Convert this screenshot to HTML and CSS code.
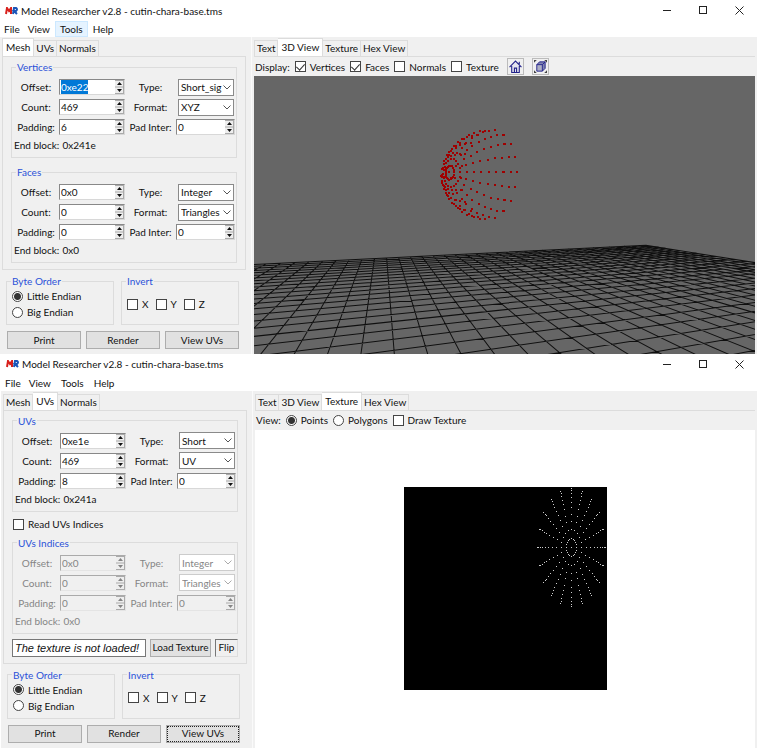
FILE: index.html
```html
<!DOCTYPE html>
<html lang="en">
<head>
<meta charset="utf-8">
<title>Model Researcher</title>
<link rel="stylesheet" href="styles.css">
</head>
<body>
<svg width="0" height="0" class="defs" aria-hidden="true">
  <symbol id="logo" viewBox="0 0 13 8">
    <path d="M1 7L2 1L4 4L6 1L6 7" fill="none" stroke="#d8201c" stroke-width="2"/>
    <path d="M8 7L9 1H11Q13 2 11 4H9L12 7" fill="none" stroke="#1a55b8" stroke-width="2"/>
  </symbol>
  <symbol id="min" viewBox="0 0 9 9"><path d="M0 4.5H8" stroke="#222" fill="none"/></symbol>
  <symbol id="max" viewBox="0 0 9 9"><rect x=".5" y=".5" width="7" height="7" stroke="#222" fill="none"/></symbol>
  <symbol id="close" viewBox="0 0 9 9"><path d="M.5 .5L8.500 8.500M8.500 .5L.5 8.500" stroke="#222" fill="none"/></symbol>
  <symbol id="home" viewBox="0 0 12 12">
    <path d="M2 6V11.500H10V6L6 2Z" fill="#e4e4ee"/>
    <path d="M.5 6.500L6 1L11.500 6.500M2.500 5.500V11.500H9.500V5.500M9.500 4V1.500M5 11V7.500H7V11" fill="none" stroke="#22228a"/>
  </symbol>
  <symbol id="cube" viewBox="0 0 14 14">
    <path d="M3 5H9V12H3Z" fill="#aeb0c4"/><path d="M3 5L6 2H12L9 5M12 2V9L9 12V5" fill="#8084b0"/>
    <path d="M3 5H9V12H3ZM3 5L6 2H12L9 5M12 2V9L9 12" fill="none" stroke="#22228a"/>
    <path d="M0 0H3L0 3ZM14 0V3L11 0ZM0 14V11L3 14ZM14 14H11L14 11Z" fill="#444"/>
  </symbol>
</svg>

<main class="desktop">
<section class="window first">
  <header class="title"><svg class="logo"><use href="#logo"/></svg><h1>Model Researcher v2.8 - cutin-chara-base.tms</h1>
    <button class="sys" aria-label="Minimize"><svg><use href="#min"/></svg></button><button class="sys" aria-label="Maximize"><svg><use href="#max"/></svg></button><button class="sys" aria-label="Close"><svg><use href="#close"/></svg></button></header>
  <nav class="menu"><button>File</button><button>View</button><button class="hot">Tools</button><button>Help</button></nav>
  <div class="body">
    <div class="side">
      <div class="tabs"><button class="on">Mesh</button><button>UVs</button><button>Normals</button></div>
      <div class="page">
        <fieldset class="params" data-id="v" data-v="0xe22,Short_sig,469,XYZ,6,0,0x241e" data-selected="yes"><legend>Vertices</legend></fieldset>
        <fieldset class="params" data-id="f" data-v="0x0,Integer,0,Triangles,0,0,0x0"><legend>Faces</legend></fieldset>
      </div>
      <div class="options">
        <fieldset class="order"><legend>Byte Order</legend><label><input type="radio" name="bo1" checked>Little Endian</label><label><input type="radio" name="bo1">Big Endian</label></fieldset>
        <fieldset class="invert"><legend>Invert</legend><label><input type="checkbox">X</label><label><input type="checkbox">Y</label><label><input type="checkbox">Z</label></fieldset>
      </div>
      <div class="actions"><button>Print</button><button>Render</button><button>View UVs</button></div>
    </div>
    <div class="main">
      <div class="tabs"><button>Text</button><button class="on">3D View</button><button>Texture</button><button>Hex View</button></div>
      <div class="toolbar"><span>Display:</span><label><input type="checkbox" checked>Vertices</label><label><input type="checkbox" checked>Faces</label><label><input type="checkbox">Normals</label><label><input type="checkbox">Texture</label>
        <button class="tool" aria-label="Home view"><svg><use href="#home"/></svg></button><button class="tool" aria-label="Fit view"><svg><use href="#cube"/></svg></button></div>
      <svg id="scene" class="scene" viewBox="254 76 500 277" preserveAspectRatio="xMidYMid slice" role="img" aria-label="3D view"></svg>
    </div>
  </div>
</section>

<section class="window second">
  <header class="title"><svg class="logo"><use href="#logo"/></svg><h1>Model Researcher v2.8 - cutin-chara-base.tms</h1>
    <button class="sys" aria-label="Minimize"><svg><use href="#min"/></svg></button><button class="sys" aria-label="Maximize"><svg><use href="#max"/></svg></button><button class="sys" aria-label="Close"><svg><use href="#close"/></svg></button></header>
  <nav class="menu"><button>File</button><button>View</button><button>Tools</button><button>Help</button></nav>
  <div class="body">
    <div class="side">
      <div class="tabs"><button>Mesh</button><button class="on">UVs</button><button>Normals</button></div>
      <div class="page">
        <fieldset class="params" data-id="u" data-v="0xe1e,Short,469,UV,8,0,0x241a"><legend>UVs</legend></fieldset>
        <label class="read"><input type="checkbox">Read UVs Indices</label>
        <fieldset class="params off" data-id="i" data-v="0x0,Integer,0,Triangles,0,0,0x0" disabled><legend>UVs Indices</legend></fieldset>
        <div class="load"><input class="path" aria-label="Texture file" value="The texture is not loaded!" readonly><button>Load Texture</button><button class="flip">Flip</button></div>
      </div>
      <div class="options">
        <fieldset class="order"><legend>Byte Order</legend><label><input type="radio" name="bo2" checked>Little Endian</label><label><input type="radio" name="bo2">Big Endian</label></fieldset>
        <fieldset class="invert"><legend>Invert</legend><label><input type="checkbox">X</label><label><input type="checkbox">Y</label><label><input type="checkbox">Z</label></fieldset>
      </div>
      <div class="actions"><button>Print</button><button>Render</button><button class="focus">View UVs</button></div>
    </div>
    <div class="main">
      <div class="tabs"><button>Text</button><button>3D View</button><button class="on">Texture</button><button>Hex View</button></div>
      <div class="toolbar"><span>View:</span><label><input type="radio" name="vw" checked>Points</label><label><input type="radio" name="vw">Polygons</label><label><input type="checkbox">Draw Texture</label></div>
      <div class="sheet"><svg id="uv" viewBox="404 487 203 203" role="img" aria-label="UV points"></svg></div>
    </div>
  </div>
</section>
</main>
<script src="app.js"></script>
</body>
</html>
```
FILE: styles.css
```css
* { box-sizing: border-box; }
body { margin: 0; background: #fff; color: #111; font: 10px/16px Lato, "Open Sans", sans-serif; }
button, input, select { font: inherit; color: inherit; margin: 0; border-radius: 0; }
h1 { font: inherit; margin: 0; flex: 1; }
.defs { position: absolute; }
.window { display: flex; flex-direction: column; }
.second { margin-left: 1px; padding-bottom: 2px; }
.title { display: flex; align-items: center; height: 21px; padding-left: 5px; }
.logo { width: 13px; height: 8px; margin-right: 3px; }
.sys { width: 36px; height: 20px; padding: 0; border: 0; background: none; display: grid; place-items: center; }
.sys svg { width: 9px; height: 9px; }
.menu { display: flex; height: 16px; }
.menu button { border: 0; background: none; padding: 0 5px; line-height: 16px; }
.menu button:first-child { padding: 0 3px 0 4px; }
.menu .hot { background: #e5f3ff; outline: 1px solid #cce8ff; outline-offset: -1px; }
.body { display: grid; grid-template-columns: 251px 1fr; background: #f0f0f0; }
.side { padding: 1px 5px 4px 2px; }
.main { display: flex; flex-direction: column; padding: 1px 2px 0; min-width: 0; border-left: 1px solid #fafafa; }
.tabs { display: flex; align-items: flex-end; height: 18px; }
.tabs button { height: 16px; padding: 0 2px; line-height: 15px; border: 1px solid #dcdcdc; border-bottom: 0; border-left-width: 0; background: #f0f0f0; white-space: nowrap; }
.tabs button:first-child { border-left-width: 1px; }
.tabs .on { height: 18px; padding: 0 3px; background: #fff; }
.page { border: 1px solid #dcdcdc; padding: 3px 8px 6px; }
fieldset { border: 1px solid #dcdcdc; margin: 0; padding: 0; min-width: 0; }
legend { color: #2a50d8; padding: 0 1px; margin-left: 4px; line-height: 14px; }
.params { height: 98px; }
.params + .params { margin-top: 7px; }
.grid { display: grid; grid-template-columns: 42px 66px 47px 59px; column-gap: 2px; grid-auto-rows: 20px; align-items: center; padding: 3px 0 0 3px; }
.grid label { text-align: center; white-space: nowrap; }
.end { padding-left: 2px; line-height: 17px; }
.end b { font-weight: normal; margin-left: 3px; }
.spin { display: flex; height: 16px; background: #fff; border: 1px solid #d8d8d8; border-top-color: #888; border-left-color: #888; }
.spin input { flex: 1; min-width: 0; width: 0; border: 0; background: none; padding: 0 0 0 1px; height: 14px; outline: 0; }
.spin svg { width: 9px; height: 14px; background: #eee; }
.spin input::selection { background: #0078d7; color: #fff; }
select { appearance: none; width: 56px; height: 17px; border: 1px solid #8a8a8a; padding: 0 10px 0 2px; background: #fff; line-height: 14px; opacity: 1; }
.drop { display: grid; grid-template-columns: 56px; padding-left: 2px; }
.drop select, .drop svg { grid-area: 1 / 1; }
.drop svg { justify-self: end; align-self: center; width: 8px; height: 5px; margin-right: 3px; pointer-events: none; color: #555; }
.off { color: #858585; }
.off .spin { background: #f0f0f0; border-color: #e4e4e4; border-top-color: #aaa; border-left-color: #aaa; }
.off select { border-color: #ccc; }
.off .drop svg { color: #aaa; }
.options { display: grid; grid-template-columns: 108px 118px; gap: 7px; padding: 4px 0 0 4px; }
.options fieldset { height: 51px; }
.options label, .toolbar label, .read { display: flex; align-items: center; }
.order label { height: 16px; padding-left: 5px; }
.invert label { display: inline-flex; margin: 8px 2px 0 5px; }
input[type=checkbox], input[type=radio] { appearance: none; flex: none; display: grid; place-items: center; width: 11px; height: 11px; border: 1px solid #444; background: #fff; margin-right: 4px; }
input[type=radio] { border-radius: 50%; }
input[type=radio]:checked { background: radial-gradient(circle, #333 0 3px, #fff 4px); }
input[type=checkbox]:checked::after { content: ""; width: 4px; height: 7px; margin-bottom: 2px; border: solid #333; border-width: 0 1px 1px 0; transform: rotate(42deg); }
.actions { display: grid; grid-template-columns: repeat(3, 74px); gap: 5px; padding: 6px 0 0 5px; }
.actions button, .load button { height: 18px; padding: 0; border: 1px solid #adadad; background: #e1e1e1; line-height: 15px; white-space: nowrap; }
.actions .focus { outline: 1px dotted #222; outline-offset: -2px; }
.read { height: 17px; margin: 4px 0 3px 1px; }
.load { display: grid; grid-template-columns: 134px 61px 23px; gap: 4px; margin-top: 5px; }
.path { height: 18px; border: 1px solid #777; background: #fff; font: italic 11px/16px "Liberation Sans", sans-serif; padding: 0 2px; min-width: 0; }
.load .flip { background: #f0f0f0; border: 1px solid #ddd; border-top-color: #777; border-left-color: #777; }
.toolbar { display: flex; align-items: center; height: 20px; border-top: 1px solid #dcdcdc; padding-left: 1px; gap: 5px; white-space: nowrap; }
.tool { width: 17px; height: 17px; padding: 0; margin-left: 3px; background: #f0f0f0; border: 1px solid #bbb; display: grid; place-items: center; }
.tool svg { width: 13px; height: 13px; }
.scene { display: block; width: 100%; flex: 1; min-height: 277px; background: #666; }
.sheet { flex: 1; min-height: 318px; background: #fff; display: grid; place-items: center; }
.sheet svg { width: 203px; height: 203px; background: #000; }
```
FILE: app.js
```js
const arrow = '<svg viewBox="0 0 9 14"><path d="M0 .5H9M0 7H9M8.500 0V14M0 13.500H9" stroke="#aaa" fill="none"/><path d="M2 5H7L4.500 2ZM2 9H7L4.500 12Z" fill="currentColor"/></svg>';
const chevron = '<svg viewBox="0 0 8 5"><path d="M.5 .5L4 4L7.500 .5" fill="none" stroke="currentColor"/></svg>';

// Fill every parameter group with its labelled fields.
document.querySelectorAll('.params').forEach(group => {
  const id = group.dataset.id;
  const v = group.dataset.v.split(',');
  const spin = (name, value) => `<label for="${id}${name}">${name}:</label><span class="spin"><input id="${id}${name}" value="${value}">${arrow}</span>`;
  const drop = (name, value) => `<label for="${id}${name}">${name}:</label><span class="drop"><select id="${id}${name}"><option>${value}</option></select>${chevron}</span>`;
  group.insertAdjacentHTML('beforeend', `<div class="grid">${spin('Offset', v[0])}${drop('Type', v[1])}${spin('Count', v[2])}${drop('Format', v[3])}${spin('Padding', v[4])}${spin('Pad Inter', v[5])}</div><div class="end">End block:<b>${v[6]}</b></div>`);
  if (group.dataset.selected) group.querySelector('input').select();
});

// Ground plane: two pencils of lines, one per vanishing point.
const NS = 'http://www.w3.org/2000/svg';
const add = (host, d, attrs) => {
  const p = document.createElementNS(NS, 'path');
  p.setAttribute('d', d);
  Object.entries(attrs).forEach(([k, val]) => p.setAttribute(k, val));
  host.appendChild(p);
};
const bottom = 353, horizon = 203;
const va = 382, vb = 1502;
const a = k => 394 + 33.2 * k;
const b = k => 277 + 92 * k;
const cross = (i, j) => {
  const p = (a(i) - va) / (bottom - horizon), q = (b(j) - vb) / (bottom - horizon);
  const t = (vb - va) / (p - q);
  return [va + p * t, horizon + t];
};
let floor = '';
for (let i = -30; i <= 28; i++) floor += 'M' + cross(i, -20) + 'L' + [va + (a(i) - va) * 1.2, horizon + 180];
for (let j = -20; j <= 6; j++) {
  const c = cross(28, j), s = (c[0] - vb) / (c[1] - horizon);
  floor += 'M' + c + 'L' + [vb + s * 180, horizon + 180];
}
const scene = document.getElementById('scene');
add(scene, floor, { stroke: '#000', 'stroke-opacity': 0.85, fill: 'none' });

// Dome vertices.
let dome = '';
for (let k = 0; k <= 10; k++) {
  for (let m = 0; m < 20; m++) {
    const t = k * Math.PI / 20, f = m * Math.PI / 10;
    const s = Math.sin(t), c = Math.cos(f);
    const x = 166 - 109 * Math.cos(t) + (c > 0 ? 92 : 74) * s * c;
    const y = 157 + s * (8 - 10 * c) + s * (133 + 14 * c) * Math.sin(f);
    dome += `M${Math.round(430 + x / 3) - 1} ${Math.round(120 + y / 3) - 1}h2v2h-2z`;
  }
}
add(scene, dome, { fill: '#a00000', 'shape-rendering': 'crispEdges' });

// Texture coordinates.
let uv = '';
const radii = [0, 0.15, 0.3, 0.44, 0.56, 0.67, 0.76, 0.84, 0.91, 0.96, 1];
for (const r of radii) {
  for (let m = 0; m < 20; m++) {
    const f = m * Math.PI / 10;
    uv += `M${Math.round(571 + 34 * r * Math.cos(f))} ${Math.round(547 + 59 * r * Math.sin(f))}h1v1h-1z`;
  }
}
add(document.getElementById('uv'), uv, { fill: '#ccc', 'shape-rendering': 'crispEdges' });
```
